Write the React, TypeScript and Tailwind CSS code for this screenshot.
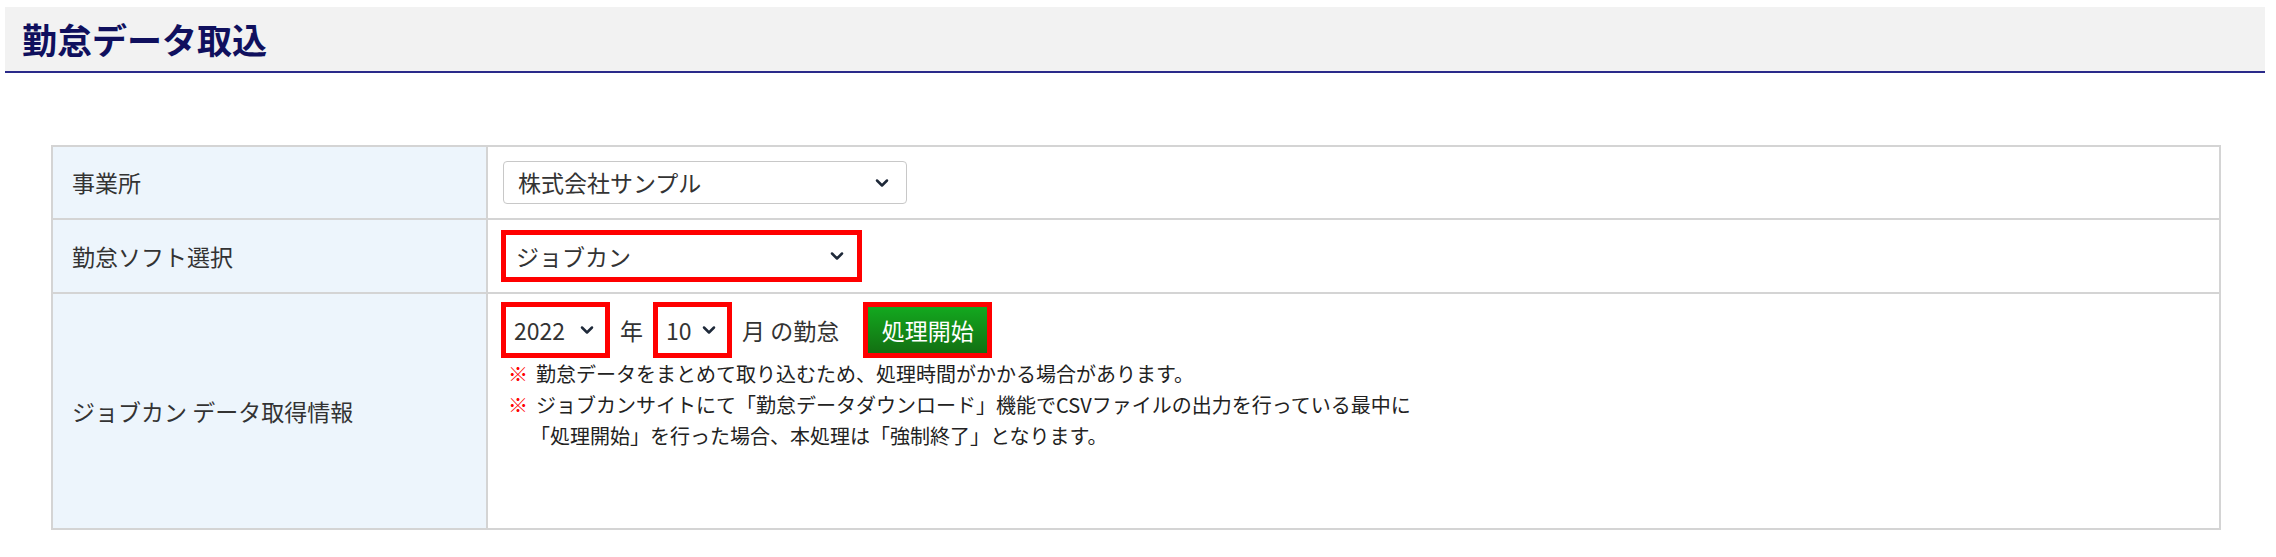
import { ChevronDown } from "lucide-react";

const font = { fontFamily: '"Noto Sans CJK JP", sans-serif' };

const Select = ({ value, className }: { value: string; className: string }) => (
  <div className={`flex items-center justify-between bg-white ${className}`}>
    <span>{value}</span>
    <ChevronDown className="w-5 h-5 text-gray-800" strokeWidth={3} />
  </div>
);

export default function App() {
  return (
    <div className="w-[2276px] h-[557px] bg-white text-[23px] text-[#333]" style={font}>
      <div className="ml-[5px] mt-[7px] mr-[11px] h-[66px] bg-[#f2f2f2] border-b-2 border-[#2a2a8a] flex items-center pl-[17px]">
        <h1 className="text-[35px] font-bold text-[#10105e]">勤怠データ取込</h1>
      </div>
      <div className="ml-[51px] mt-[72px] w-[2170px] border-2 border-[#d4d4d4] grid grid-cols-[435px_1fr]">
        <div className="h-[73px] bg-[#edf5fc] border-r-2 border-b-2 border-[#d4d4d4] flex items-center pl-[19px]">事業所</div>
        <div className="h-[73px] border-b-2 border-[#d4d4d4] flex items-center pl-[15px]">
          <Select value="株式会社サンプル" className="w-[404px] h-[43px] border border-[#c8c8c8] rounded px-[14px]" />
        </div>
        <div className="h-[74px] bg-[#edf5fc] border-r-2 border-b-2 border-[#d4d4d4] flex items-center pl-[19px]">勤怠ソフト選択</div>
        <div className="h-[74px] border-b-2 border-[#d4d4d4] flex items-center pl-[13px]">
          <Select value="ジョブカン" className="w-[361px] h-[52px] border-[5px] border-[#ff0000] px-[10px]" />
        </div>
        <div className="h-[234px] bg-[#edf5fc] border-r-2 border-[#d4d4d4] flex items-center pl-[19px]">ジョブカン データ取得情報</div>
        <div className="h-[234px] pl-[13px] pt-[8px]">
          <div className="flex items-center gap-[10px] h-[56px]">
            <Select value="2022" className="w-[109px] h-[56px] border-[5px] border-[#ff0000] px-[8px]" />
            <span>年</span>
            <Select value="10" className="w-[79px] h-[56px] border-[5px] border-[#ff0000] px-[8px]" />
            <span>月 の勤怠</span>
            <div className="ml-[14px] w-[129px] h-[56px] border-[5px] border-[#ff0000] bg-[linear-gradient(#13a81f,#137012)] text-white flex items-center justify-center">処理開始</div>
          </div>
          <div className="text-[20px] text-[#222] leading-[31px] pl-[7px]">
            <p><span className="text-[#ff0000] mr-[8px]">※</span>勤怠データをまとめて取り込むため、処理時間がかかる場合があります。</p>
            <p><span className="text-[#ff0000] mr-[8px]">※</span>ジョブカンサイトにて「勤怠データダウンロード」機能でCSVファイルの出力を行っている最中に</p>
            <p className="pl-[22px]">「処理開始」を行った場合、本処理は「強制終了」となります。</p>
          </div>
        </div>
      </div>
    </div>
  );
}
